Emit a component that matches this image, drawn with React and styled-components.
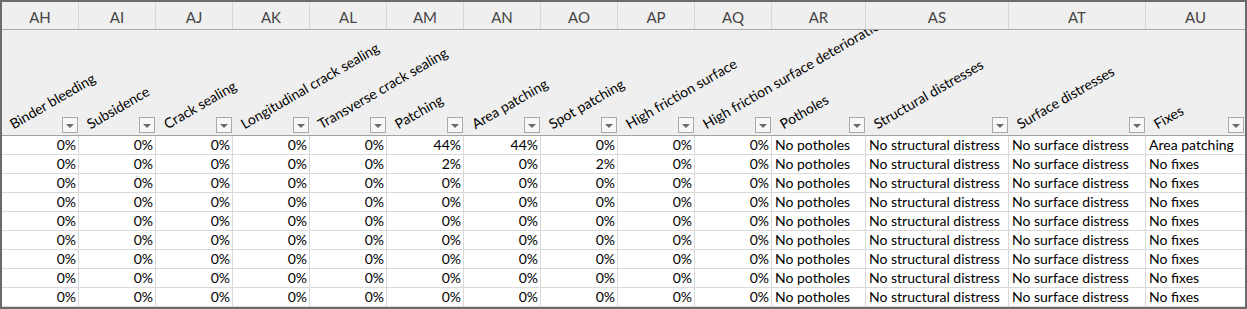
import React from "react"
import styled, { createGlobalStyle } from "styled-components"

const GlobalStyle = createGlobalStyle`
  html, body {
    margin: 0;
    padding: 0;
    background: #ffffff;
  }
  body {
    font-family: Lato, "Open Sans", sans-serif;
  }
`

const WIDTHS = [77, 77, 77, 77, 77, 77, 77, 77, 77, 77, 94, 143, 137, 99]

const columns = [
  { letter: "AH", title: "Binder bleeding", kind: "pct" },
  { letter: "AI", title: "Subsidence", kind: "pct" },
  { letter: "AJ", title: "Crack sealing", kind: "pct" },
  { letter: "AK", title: "Longitudinal crack sealing", kind: "pct" },
  { letter: "AL", title: "Transverse crack sealing", kind: "pct" },
  { letter: "AM", title: "Patching", kind: "pct" },
  { letter: "AN", title: "Area patching", kind: "pct" },
  { letter: "AO", title: "Spot patching", kind: "pct" },
  { letter: "AP", title: "High friction surface", kind: "pct" },
  { letter: "AQ", title: "High friction surface deterioration", kind: "pct" },
  { letter: "AR", title: "Potholes", kind: "text" },
  { letter: "AS", title: "Structural distresses", kind: "text" },
  { letter: "AT", title: "Surface distresses", kind: "text" },
  { letter: "AU", title: "Fixes", kind: "text" },
]

const tail = ["No potholes", "No structural distress", "No surface distress"]
const zeros = ["0%", "0%", "0%", "0%", "0%"]

const rows = [
  [...zeros, "44%", "44%", "0%", "0%", "0%", ...tail, "Area patching"],
  [...zeros, "2%", "0%", "2%", "0%", "0%", ...tail, "No fixes"],
  ...Array.from({ length: 7 }, () => [
    ...zeros, "0%", "0%", "0%", "0%", "0%", ...tail, "No fixes",
  ]),
]

const Frame = styled.div`
  width: 1247px;
  height: 309px;
  box-sizing: border-box;
  border: 2px solid #6b6b6b;
  background: #ffffff;
  overflow: hidden;
`

const Row = styled.div`
  display: grid;
  grid-template-columns: ${WIDTHS.map(w => `${w}px`).join(" ")};
`

const LetterRow = styled(Row)`
  height: 28px;
  background: #efefef;
  border-bottom: 1px solid #ababab;
  box-sizing: border-box;
`

const Letter = styled.div`
  display: flex;
  align-items: center;
  justify-content: center;
  padding-top: 2px;
  font-size: 15px;
  color: #444444;
  border-right: 1px solid #d6d6d6;
  &:last-child {
    border-right: none;
  }
`

const TitleRow = styled(Row)`
  height: 106px;
  background: #efefef;
  border-bottom: 1px solid #a3a3a3;
  box-sizing: border-box;
  overflow: hidden;
`

const TitleCell = styled.div`
  display: flex;
  align-items: flex-end;
  padding: 0 1px 1px 13px;
  min-width: 0;
`

const Title = styled.span`
  flex: 0 0 0;
  width: 0;
  white-space: nowrap;
  font-size: 14px;
  color: #000000;
  line-height: 17px;
  margin-bottom: 2px;
  transform-origin: 0 100%;
  transform: rotate(-30deg);
  position: relative;
  z-index: 1;
`

const Filter = styled.div`
  margin-left: auto;
  width: 16px;
  height: 16px;
  margin-bottom: 1px;
  box-sizing: border-box;
  border: 1px solid #a9a9a9;
  background: #f7f7f7;
  display: flex;
  align-items: center;
  justify-content: center;
  position: relative;
  z-index: 2;
  &::after {
    content: "";
    width: 0;
    height: 0;
    border-left: 4px solid transparent;
    border-right: 4px solid transparent;
    border-top: 4px solid #6a6a6a;
    margin-top: 1px;
  }
`

const DataRow = styled(Row)`
  height: 19px;
`

const Cell = styled.div`
  box-sizing: border-box;
  border-right: 1px solid #d9d9d9;
  border-bottom: 1px solid #d9d9d9;
  font-size: 14px;
  line-height: 18px;
  color: #000000;
  white-space: nowrap;
  overflow: hidden;
  padding: 0 2px 0 ${p => (p.$num ? "2px" : "3px")};
  text-align: ${p => (p.$num ? "right" : "left")};
  &:last-child {
    border-right: none;
  }
`

const App = () => (
  <>
    <GlobalStyle />
    <Frame>
      <LetterRow>
        {columns.map(c => (
          <Letter key={c.letter}>{c.letter}</Letter>
        ))}
      </LetterRow>
      <TitleRow>
        {columns.map(c => (
          <TitleCell key={c.letter}>
            <Title>{c.title}</Title>
            <Filter />
          </TitleCell>
        ))}
      </TitleRow>
      {rows.map((r, i) => (
        <DataRow key={i}>
          {r.map((v, j) => (
            <Cell key={j} $num={columns[j].kind === "pct"}>
              {v}
            </Cell>
          ))}
        </DataRow>
      ))}
    </Frame>
  </>
)

export default App
